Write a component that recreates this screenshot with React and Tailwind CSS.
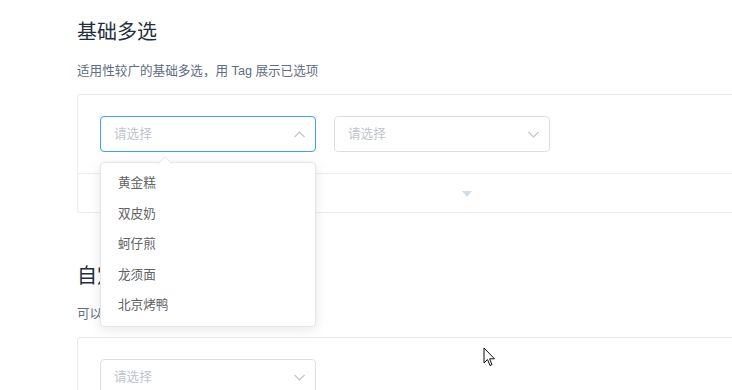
import React from 'react';

const foods = ['黄金糕', '双皮奶', '蚵仔煎', '龙须面', '北京烤鸭'];

const font = { fontFamily: '"Liberation Sans", "Noto Sans CJK SC", sans-serif' };

function Chevron({ up }) {
  return (
    <svg width="11" height="7" viewBox="0 0 11 7" fill="none">
      <path
        d={up ? 'M0.5 6 L5.5 1 L10.5 6' : 'M0.5 1 L5.5 6 L10.5 1'}
        stroke="#c0c4cc"
        strokeWidth="1.1"
      />
    </svg>
  );
}

function Select({ open }) {
  return (
    <div
      className={
        open
          ? 'w-[216px] h-[36px] rounded-[4px] border border-[#409eff] bg-white flex items-center pl-[13px] pr-[10px]'
          : 'w-[216px] h-[36px] rounded-[4px] border border-[#dcdfe6] bg-white flex items-center pl-[13px] pr-[10px]'
      }
    >
      <span className="flex-1 text-[12.6px] leading-[20px] text-[#c0c4cc]">请选择</span>
      <Chevron up={open} />
    </div>
  );
}

function Dropdown() {
  return (
    <div className="absolute left-0 top-[46px] z-10 w-[216px] rounded-[4px] border border-[#e4e7ed] bg-white py-[5px] shadow-[0_2px_12px_0_rgba(0,0,0,0.1)]">
      <svg className="absolute left-[57px] top-[-7px]" width="14" height="8" viewBox="0 0 14 8">
        <path d="M0 8 L7 1 L14 8" fill="#fff" stroke="#e4e7ed" strokeWidth="1" />
      </svg>
      {foods.map((f) => (
        <div key={f} className="h-[30.5px] leading-[30.5px] pl-[17px] text-[12.6px] text-[#606266]">
          {f}
        </div>
      ))}
    </div>
  );
}

function DemoBlock({ children }) {
  return (
    <div className="mt-[13px] w-[780px] rounded-[3px] border border-[#ebebeb] bg-white">
      <div className="flex gap-[18px] px-[22px] pt-[21px] pb-[21px]">{children}</div>
      <div className="h-[39px] pt-[2px] border-t border-[#eaeefb] flex items-center justify-center">
        <svg width="10" height="6" viewBox="0 0 10 6">
          <path d="M0 0 L10 0 L5 6 Z" fill="#d3dce6" />
        </svg>
      </div>
    </div>
  );
}

export default function App() {
  return (
    <div className="relative w-[732px] h-[390px] overflow-hidden bg-white pl-[77px] pt-[18px]" style={font}>
      <h3 className="text-[20px] leading-[28px] text-[#1f2f3d] font-normal">基础多选</h3>
      <p className="mt-[15px] text-[12.6px] leading-[20px] text-[#5e6d82]">
        适用性较广的基础多选，用 Tag 展示已选项
      </p>
      <DemoBlock>
        <div className="relative">
          <Select open />
          <Dropdown />
        </div>
        <Select />
      </DemoBlock>

      <h3 className="mt-[49px] text-[20px] leading-[28px] text-[#1f2f3d] font-normal">自定义模板</h3>
      <p className="mt-[14px] text-[12.6px] leading-[20px] text-[#5e6d82]">可以自定义备选项</p>
      <DemoBlock>
        <Select />
      </DemoBlock>

      <svg className="absolute left-[483px] top-[347px]" width="13" height="21" viewBox="0 0 13 21">
        <path
          d="M1 1 L1 16 L4.5 12.5 L7 18.5 L9 17.6 L6.6 11.8 L11.5 11.8 Z"
          fill="#fff"
          stroke="#111"
          strokeWidth="1"
          strokeLinejoin="round"
        />
      </svg>
    </div>
  );
}
